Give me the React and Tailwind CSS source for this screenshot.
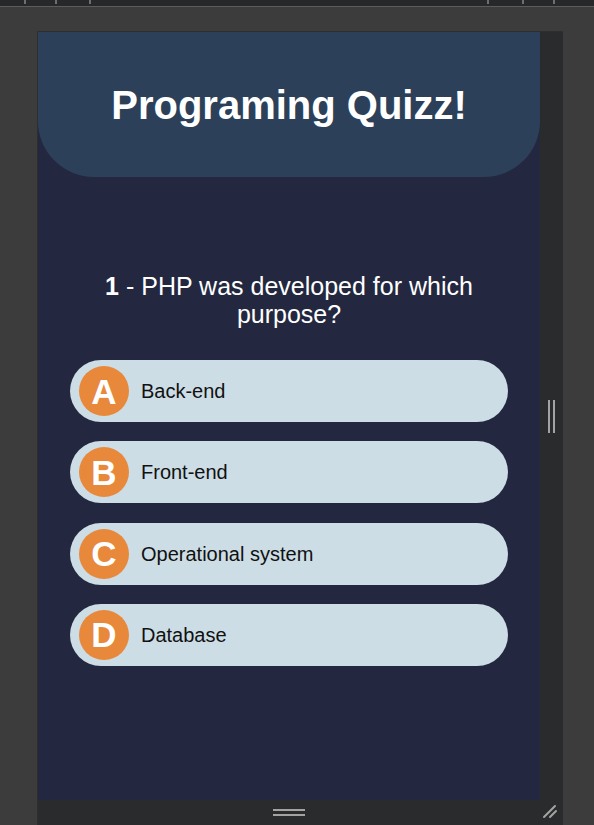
import React from "react";

const options = [
  { letter: "A", label: "Back-end" },
  { letter: "B", label: "Front-end" },
  { letter: "C", label: "Operational system" },
  { letter: "D", label: "Database" },
];

function Ruler() {
  return (
    <div className="h-[6px] bg-[#27282a] relative border-b border-[#5c5c5c] box-content">
      {[24, 55, 89, 487, 522, 553].map((x) => (
        <div key={x} className="absolute top-0 w-[2px] h-[4px] bg-[#6e6e6e]" style={{ left: x }} />
      ))}
    </div>
  );
}

function Option({ letter, label }) {
  return (
    <div className="h-[62px] rounded-full bg-[#cddde6] flex items-center pl-[9px]">
      <div className="w-[50px] h-[50px] rounded-full bg-[#e8883a] flex items-center justify-center text-white font-bold text-[35px] leading-none">
        {letter}
      </div>
      <span className="ml-[12px] text-[20px] text-[#111]">{label}</span>
    </div>
  );
}

export default function App() {
  return (
    <div className="h-[825px] w-[594px] bg-[#3c3c3c] overflow-hidden" style={{ fontFamily: '"Liberation Sans", Arial, sans-serif' }}>
      <Ruler />
      <div className="pt-[24px]">
        <div className="ml-[37px] w-[526px] border-l border-t border-[#2e2e2e]">
          <div className="flex h-[768px]">
            <div className="w-[502px] bg-[#232840] flex flex-col">
              <div className="h-[145px] bg-[#2c4159] rounded-b-[56px] flex items-center justify-center">
                <h1 className="text-white font-bold text-[40px] leading-none">Programing Quizz!</h1>
              </div>
              <div className="px-[32px] mt-[95px]">
                <p className="text-white text-[25px] text-center leading-[28px]">
                  <span className="font-bold">1</span> - PHP was developed for which purpose?
                </p>
                <div className="mt-[32px] flex flex-col gap-[19.3px]">
                  {options.map((o) => (
                    <Option key={o.letter} {...o} />
                  ))}
                </div>
              </div>
            </div>
            <div className="flex-1 bg-[#2a2b2d] flex items-center justify-center">
              <div className="flex gap-[3px]">
                <div className="w-[2px] h-[33px] bg-[#a3a3a3]" />
                <div className="w-[2px] h-[33px] bg-[#a3a3a3]" />
              </div>
            </div>
          </div>
          <div className="h-[25px] bg-[#2a2b2d] flex items-center relative">
            <div className="mx-auto flex flex-col gap-[3px] -translate-x-[12px]">
              <div className="w-[32px] h-[2px] bg-[#a3a3a3]" />
              <div className="w-[32px] h-[2px] bg-[#a3a3a3]" />
            </div>
            <svg className="absolute right-[5px] top-[3px]" width="16" height="16" viewBox="0 0 16 16">
              <path d="M2 14 L13 3 M8 14 L14 8" stroke="#a3a3a3" strokeWidth="2" strokeLinecap="round" />
            </svg>
          </div>
        </div>
      </div>
    </div>
  );
}
